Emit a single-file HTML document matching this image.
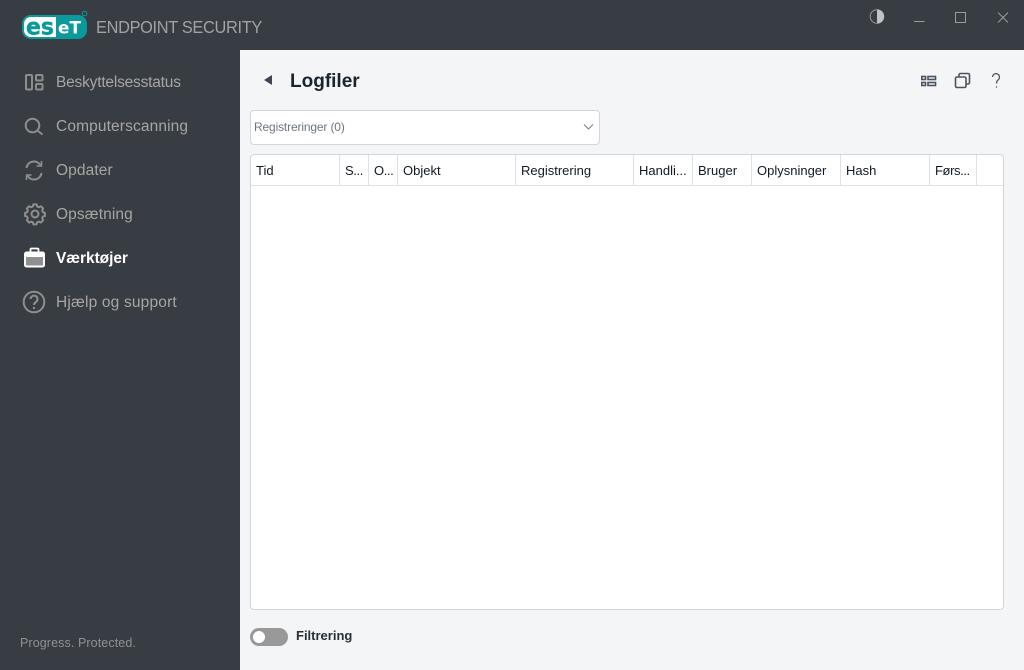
<!DOCTYPE html>
<html><head><meta charset="utf-8"><style>
html,body{margin:0;padding:0;width:1024px;height:670px;overflow:hidden;background:#f4f5f7;font-family:"Liberation Sans","Noto Sans CJK JP",sans-serif}
.a{position:absolute;white-space:nowrap}
#side{position:absolute;left:0;top:0;width:240px;height:670px;background:#383c43}
#top{position:absolute;left:0;top:0;width:1024px;height:50px;background:#383c43}
.n{font-size:15.5px;color:#a6a6a3;left:56px;line-height:20px}
.h{font-size:13px;color:#111a24;top:163px;line-height:15px}
.e{letter-spacing:-.4px}
.s{position:absolute;top:155px;width:1px;height:30px;background:#e0e1e3}
svg{position:absolute;overflow:visible}
</style></head><body>
<div id="top"></div><div id="side"></div>

<svg style="left:0;top:0" width="100" height="50">
<rect x="22" y="15" width="65" height="24" rx="9" fill="#0a9a9c"/>
<path d="M31 17H56V37H31a7 7 0 0 1-7-7V24a7 7 0 0 1 7-7z" fill="#fff"/>
<text x="26" y="34.500" font-family="DejaVu Sans" font-weight="700" font-size="23" fill="#0a9a9c" stroke="#0a9a9c" stroke-width=".4" textLength="28" lengthAdjust="spacingAndGlyphs">es</text>
<text x="58" y="33.500" font-family="DejaVu Sans" font-weight="700" font-size="17" fill="#fff" textLength="23" lengthAdjust="spacingAndGlyphs">eT</text>
<circle cx="84.500" cy="13.500" r="2.300" fill="none" stroke="#0a9a9c"/>
</svg>
<div class="a" style="left:96px;top:17px;font-size:17.500px;line-height:20px;color:#a0a2a5;letter-spacing:-.35px;transform:scaleX(.935);transform-origin:0 0">ENDPOINT SECURITY</div>

<svg style="left:0;top:0" width="50" height="320" fill="none" stroke="#8e8f8d" stroke-width="2">
<rect x="26" y="75" width="6" height="14.500" rx="1"/><rect x="36" y="75" width="6.500" height="5.500" rx="1"/><rect x="36" y="84" width="6.500" height="5.500" rx="1"/>
<circle cx="32.500" cy="125.500" r="6.800"/><path d="M38 131l4.500 3.500"/>
<path d="M26.500 168a7.500 7.500 0 0 1 13-4l1.500 1.500M41.500 173a7.500 7.500 0 0 1-13 4l-1.500-1.500"/><path d="M41.500 161v5h-5M26.500 180v-5h5" stroke-width="1.500"/>
<circle cx="35" cy="214" r="3.500"/>
<path d="M33 204h4l.7 2.500 2.300 1 2.400-1.200 2.800 2.800-1.200 2.400.9 2.300 2.500.7v4l-2.500.7-.9 2.300 1.200 2.400-2.800 2.800-2.400-1.200-2.300.9-.7 2.600h-4l-.7-2.600-2.300-.9-2.400 1.200-2.800-2.800 1.200-2.400-.9-2.300-2.500-.7v-4l2.500-.7.9-2.300-1.200-2.400 2.800-2.800 2.400 1.200 2.300-1z" transform="translate(35 214) scale(.8) translate(-35 -216)" stroke-width="2.500" stroke-linejoin="round"/>
<circle cx="34" cy="302" r="10.300"/>
<path d="M30.500 299a3.500 3.500 0 1 1 5.500 3c-1.300.9-2 1.500-2 3" />
<circle cx="34" cy="308" r=".7" fill="#8e8f8d" stroke-width="1"/>
</svg>
<svg style="left:0;top:0" width="50" height="280">
<rect x="25" y="252.500" width="19" height="14" rx="1.500" fill="#8f9092" stroke="#fff" stroke-width="2"/>
<path d="M25 252h19v5H25z" fill="#fff"/><path d="M30.500 252v-2.500a1 1 0 0 1 1-1h6a1 1 0 0 1 1 1v2.500" fill="none" stroke="#fff" stroke-width="1.800"/>
</svg>

<div class="a n" style="top:73px;letter-spacing:-.2px">Beskyttelsesstatus</div>
<div class="a n" style="top:117px;letter-spacing:.13px">Computerscanning</div>
<div class="a n" style="top:161px;letter-spacing:.1px">Opdater</div>
<div class="a n" style="top:205px;letter-spacing:.12px">Opsætning</div>
<div class="a n" style="top:249px;color:#fff;font-weight:700;letter-spacing:-.05px">Værktøjer</div>
<div class="a n" style="top:293px;letter-spacing:.18px">Hjælp og support</div>
<div class="a" style="left:20px;top:635px;font-size:12.500px;line-height:16px;color:#8f9193;letter-spacing:.1px">Progress. Protected.</div>

<svg style="left:860px;top:0" width="164" height="50" fill="none" stroke="#9a9b9c">
<circle cx="17" cy="16.500" r="6.800" stroke-width="1"/><path d="M17 9.500a7 7 0 0 1 0 14z" fill="#c2c3c4" stroke="none"/>
<path d="M54 21.500h10.500" stroke-width="1"/>
<rect x="95.500" y="12.500" width="10" height="10" stroke-width="1"/>
<path d="M138 12.500l10 10M148 12.500l-10 10" stroke-width="1"/>
</svg>

<svg style="left:260px;top:70px" width="14" height="20"><path d="M4 10L12 5v10z" fill="#3c4650"/></svg>
<div class="a" style="left:290px;top:70px;font-size:19px;line-height:24px;font-weight:700;color:#1b2530">Logfiler</div>

<svg style="left:920px;top:70px" width="90" height="24" fill="none" stroke="#4a545e">
<rect x="1.800" y="6.500" width="3.700" height="3" stroke-width="1.600"/><rect x="1.800" y="12.500" width="3.700" height="3" stroke-width="1.600"/>
<rect x="8" y="6.500" width="7.500" height="3" stroke-width="1.600"/><rect x="8" y="12.500" width="7.500" height="3" stroke-width="1.600"/>
<rect x="35.500" y="7" width="10.500" height="10.500" rx="1.500" stroke-width="1.600"/>
<path d="M39 7V5a1.500 1.500 0 0 1 1.500-1.500H48A1.500 1.500 0 0 1 49.500 5v7.500A1.500 1.500 0 0 1 48 14h-2" stroke-width="1.600"/>
<path d="M72.500 7a3.500 3.500 0 1 1 5.500 3c-1.200.9-1.500 1.600-1.500 3.500" stroke-width="1.200"/><circle cx="76.500" cy="17" r=".7" fill="#4a545e" stroke="none"/>
</svg>

<div style="position:absolute;left:250px;top:110px;width:348px;height:33px;background:#fff;border:1px solid #d5d6d8;border-radius:4px"></div>
<div class="a" style="left:254px;top:120px;font-size:12px;line-height:14px;color:#6d7680;letter-spacing:-.15px">Registreringer (0)</div>
<svg style="left:583px;top:123px" width="11" height="8"><path d="M1 1.500l4.500 4.500 4.500-4.500" fill="none" stroke="#7d848b" stroke-width="1.100"/></svg>

<div style="position:absolute;left:250px;top:154px;width:752px;height:454px;background:#fff;border:1px solid #d5d6d8;border-radius:4px"></div>
<div style="position:absolute;left:251px;top:185px;width:752px;height:1px;background:#e0e1e3"></div>
<div class="s" style="left:339px"></div><div class="s" style="left:368px"></div><div class="s" style="left:397px"></div><div class="s" style="left:515px"></div><div class="s" style="left:633px"></div><div class="s" style="left:692px"></div><div class="s" style="left:751px"></div><div class="s" style="left:840px"></div><div class="s" style="left:929px"></div><div class="s" style="left:976px"></div>
<div class="a h" style="left:256px">Tid</div>
<div class="a h e" style="left:345px">S...</div>
<div class="a h e" style="left:374px">O...</div>
<div class="a h" style="left:403px">Objekt</div>
<div class="a h" style="left:521px">Registrering</div>
<div class="a h" style="left:639px">Handli...</div>
<div class="a h" style="left:698px">Bruger</div>
<div class="a h" style="left:757px">Oplysninger</div>
<div class="a h" style="left:846px">Hash</div>
<div class="a h e" style="left:935px">Førs...</div>

<div style="position:absolute;left:250px;top:628px;width:38px;height:18px;border-radius:9px;background:#999"></div>
<div style="position:absolute;left:253px;top:631px;width:12px;height:12px;border-radius:6px;background:#fff"></div>
<div class="a" style="left:296px;top:628px;font-size:13px;line-height:15px;font-weight:700;color:#26303a">Filtrering</div>
</body></html>
